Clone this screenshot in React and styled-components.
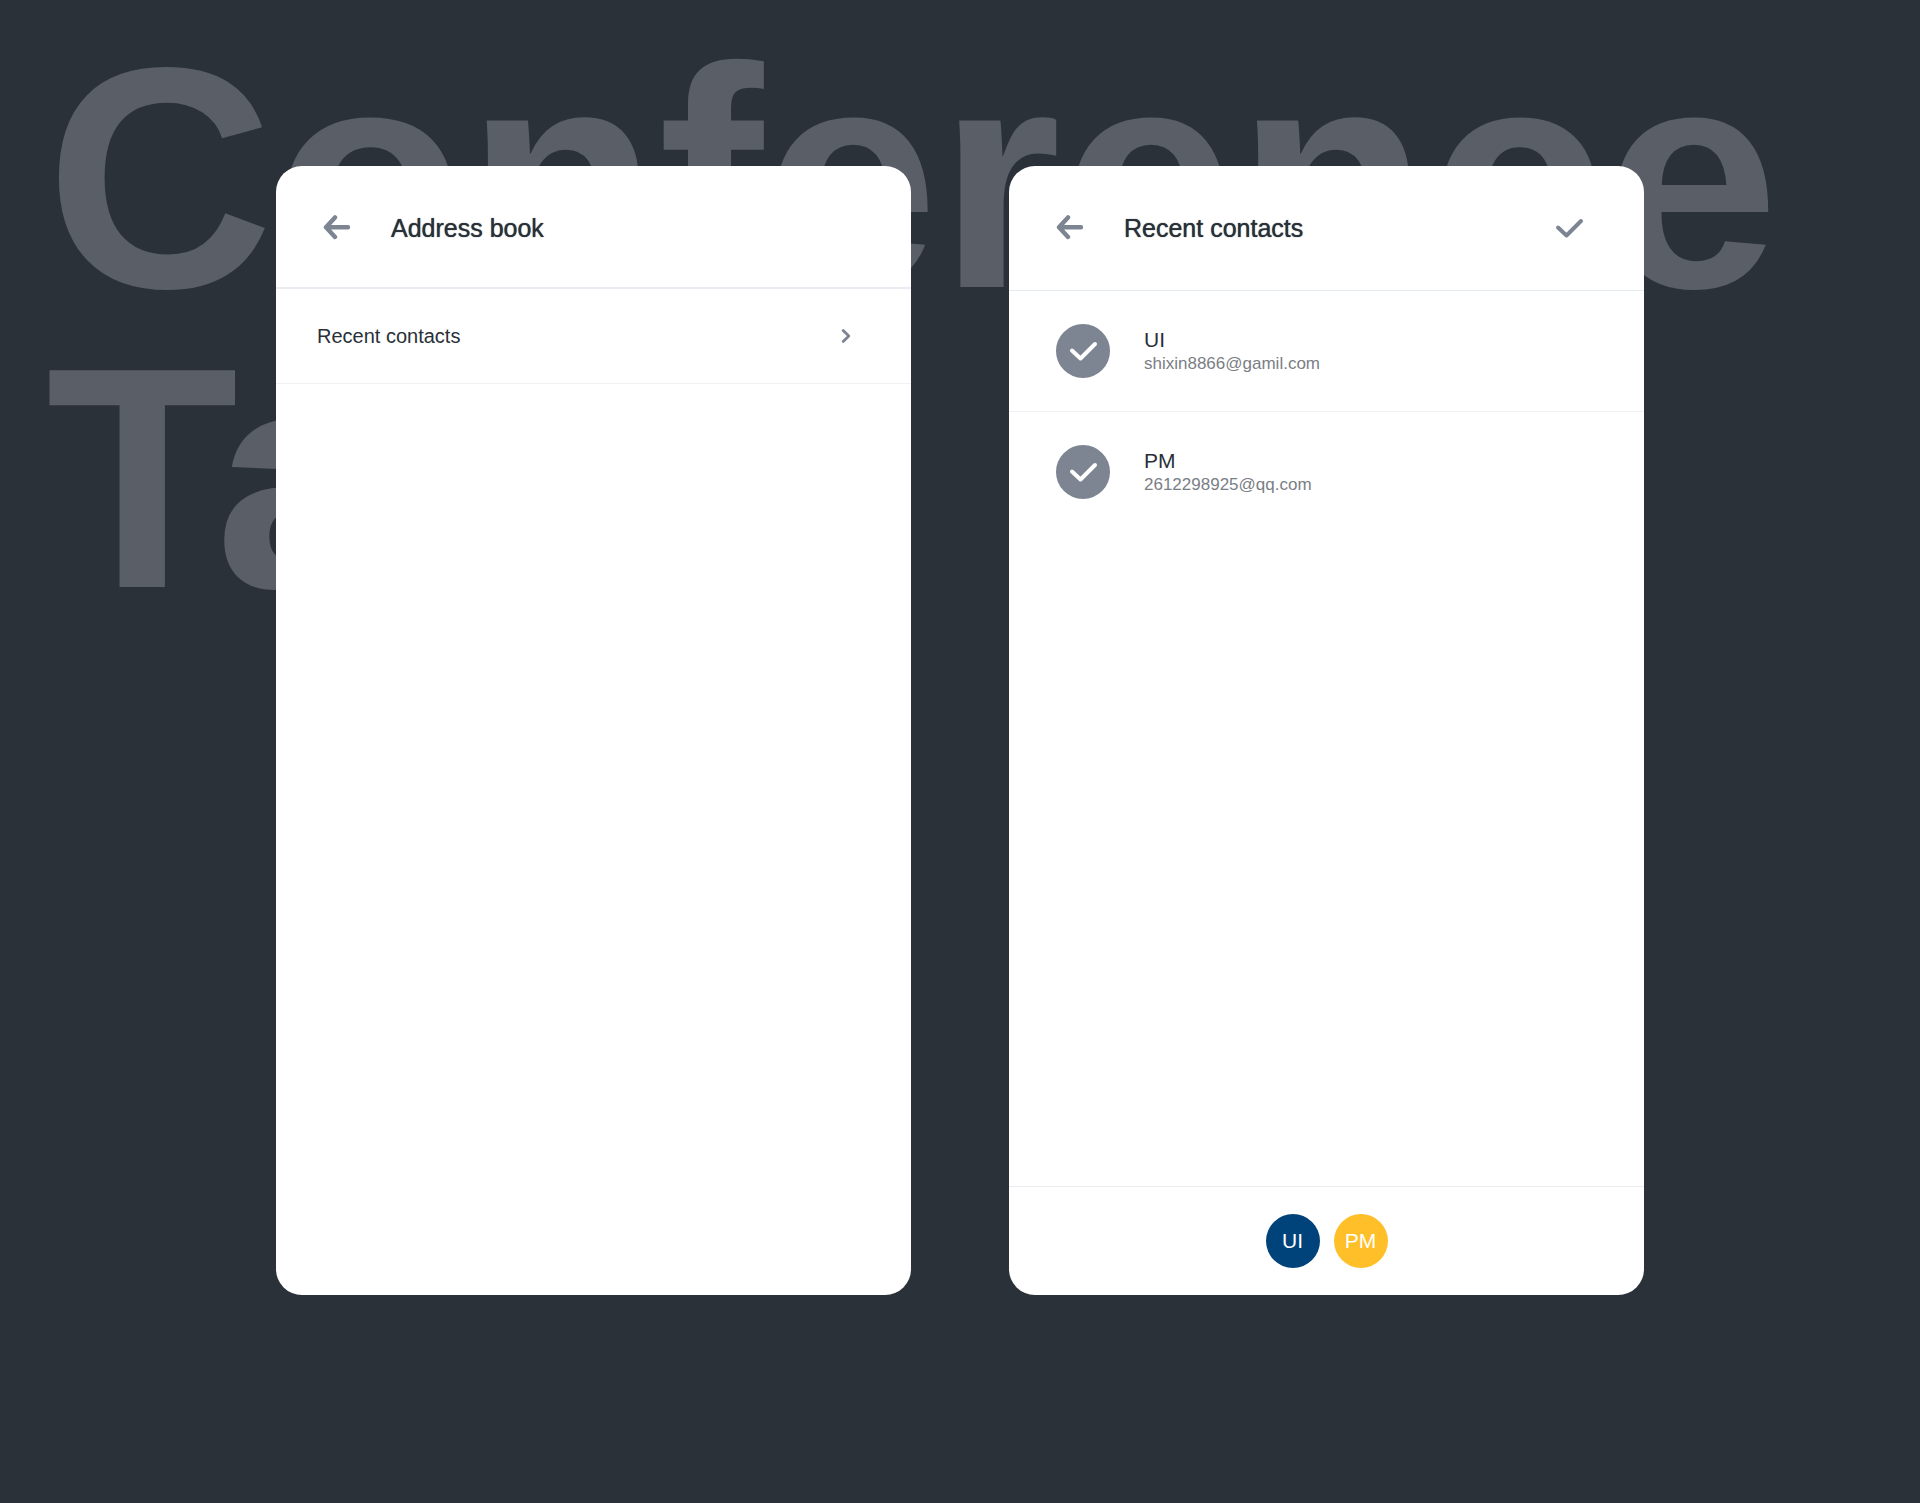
import React, { useState } from 'react'
import styled, { createGlobalStyle, ThemeProvider } from 'styled-components'

const theme = {
  color: {
    night: '#2b3139',
    ghost: '#5a5e67',
    ink: '#2a3038',
    slate: '#7d8492',
    grey: '#7a7e85',
    line: '#ebecf1',
    faint: '#f1f1f3',
    navy: '#00427a',
    amber: '#ffbf29',
  },
}

const GlobalStyle = createGlobalStyle`
  * {
    box-sizing: border-box;
  }
  body {
    margin: 0;
    background: ${theme.color.night};
    color: ${theme.color.ink};
    font-family: 'Liberation Sans', Arial, sans-serif;
  }
  button, input {
    font: inherit;
    color: inherit;
  }
`

// headline and screens share one grid cell, the screens lie on top
const Page = styled.main`
  display: grid;
  grid-template-columns: minmax(0, 1fr);
  min-height: 100vh;
  overflow: hidden;
`

const Headline = styled.h1`
  grid-area: 1 / 1;
  margin: 0;
  padding: 28px 46px 0;
  font-size: 315px;
  line-height: 300px;
  font-weight: bold;
  color: ${(props) => props.theme.color.ghost};
`

const Line = styled.span`
  display: block;
`

const Screens = styled.div`
  grid-area: 1 / 1;
  z-index: 1;
  display: flex;
  gap: 98px;
  width: 100%;
  max-width: 1368px;
  margin: 0 auto;
  padding: 166px 0 208px;
`

const Screen = styled.section`
  flex: 1;
  display: flex;
  flex-direction: column;
  background: #fff;
  border-radius: 26px;
  overflow: hidden;
`

const Header = styled.header`
  display: flex;
  align-items: center;
  padding: 47px 60px ${(props) => (props.$thick ? 44 : 47)}px 46px;
  border-bottom: ${(props) => (props.$thick ? 2 : 1)}px solid
    ${(props) => (props.$thick ? props.theme.color.line : '#e4eaf0')};
`

const IconButton = styled.button`
  display: flex;
  padding: 0;
  border: 0;
  background: none;
  color: ${(props) => props.theme.color.slate};
  cursor: pointer;
`

const Title = styled.h2`
  flex: 1;
  margin: 0 0 0 40px;
  font-size: 25px;
  line-height: 30px;
  font-weight: normal;
  text-shadow: 0 0 1px ${(props) => props.theme.color.ink};
`

const MenuRow = styled.button`
  display: flex;
  align-items: center;
  justify-content: space-between;
  padding: 35px 60px 35px 41px;
  border: 0;
  border-bottom: 1px solid ${(props) => props.theme.color.faint};
  background: none;
  font-size: 20px;
  line-height: 24px;
  text-align: left;
  cursor: pointer;
`

const Chevron = styled.svg`
  color: ${(props) => props.theme.color.slate};
`

const ContactList = styled.ul`
  flex: 1;
  margin: 0;
  padding: 0;
  list-style: none;
`

const ContactItem = styled.li`
  & + & {
    border-top: 1px solid ${(props) => props.theme.color.faint};
  }
`

const ContactLabel = styled.label`
  display: flex;
  align-items: center;
  gap: 34px;
  padding: 33px 47px;
  cursor: pointer;
`

const Tick = styled.span`
  display: grid;
  place-items: center;
  width: 54px;
  height: 54px;

  > * {
    grid-area: 1 / 1;
  }
  svg {
    color: #fff;
    pointer-events: none;
  }
`

const TickInput = styled.input`
  appearance: none;
  width: 54px;
  height: 54px;
  margin: 0;
  border: 2px solid ${(props) => props.theme.color.slate};
  border-radius: 50%;
  cursor: pointer;

  &:checked {
    background: ${(props) => props.theme.color.slate};
  }
`

const Name = styled.div`
  font-size: 21px;
  line-height: 26px;
`

const Email = styled.div`
  font-size: 17px;
  line-height: 22px;
  color: ${(props) => props.theme.color.grey};
`

const Footer = styled.footer`
  display: flex;
  justify-content: center;
  gap: 14px;
  padding: 27px;
  border-top: 1px solid #ececee;
`

const Avatar = styled.span`
  display: flex;
  align-items: center;
  justify-content: center;
  width: 54px;
  height: 54px;
  border-radius: 50%;
  background: ${(props) => props.theme.color[props.$tone]};
  color: #fff;
  font-size: 21px;
`

const BackIcon = () => (
  <svg width="29" height="26" viewBox="0 0 29 26" fill="none" stroke="currentColor">
    <path
      d="M13 2.4L4 12.2L13 22M4 12.2H26"
      strokeWidth="4.4"
      strokeLinecap="round"
      strokeLinejoin="round"
    />
  </svg>
)

const CheckIcon = () => (
  <svg width="29" height="22" viewBox="0 0 29 22" fill="none" stroke="currentColor">
    <path
      d="M3 10.5L11.5 18.5L26 4"
      strokeWidth="4"
      strokeLinecap="round"
      strokeLinejoin="round"
    />
  </svg>
)

const ChevronIcon = () => (
  <Chevron width="10" height="16" viewBox="0 0 10 16" fill="none" stroke="currentColor">
    <path
      d="M2.2 2.4L7.8 8L2.2 13.6"
      strokeWidth="2.8"
      strokeLinecap="round"
      strokeLinejoin="round"
    />
  </Chevron>
)

const contacts = [
  { name: 'UI', email: 'shixin8866@gamil.com', tone: 'navy' },
  { name: 'PM', email: '2612298925@qq.com', tone: 'amber' },
]

const Contact = ({ name, email, checked, onToggle }) => (
  <ContactItem>
    <ContactLabel>
      <Tick>
        <TickInput type="checkbox" checked={checked} onChange={onToggle} />
        <CheckIcon />
      </Tick>
      <div>
        <Name>{name}</Name>
        <Email>{email}</Email>
      </div>
    </ContactLabel>
  </ContactItem>
)

const App = () => {
  const [picked, setPicked] = useState(['UI', 'PM'])

  const toggle = (name) =>
    setPicked(
      picked.includes(name)
        ? picked.filter((item) => item !== name)
        : [...picked, name]
    )

  return (
    <ThemeProvider theme={theme}>
      <GlobalStyle />
      <Page>
        <Headline>
          <Line>Conference</Line>
          <Line>Ta</Line>
        </Headline>
        <Screens>
          <Screen>
            <Header $thick>
              <IconButton type="button" aria-label="Back">
                <BackIcon />
              </IconButton>
              <Title>Address book</Title>
            </Header>
            <MenuRow type="button">
              Recent contacts
              <ChevronIcon />
            </MenuRow>
          </Screen>

          <Screen>
            <Header>
              <IconButton type="button" aria-label="Back">
                <BackIcon />
              </IconButton>
              <Title>Recent contacts</Title>
              <IconButton type="button" aria-label="Done">
                <CheckIcon />
              </IconButton>
            </Header>
            <ContactList>
              {contacts.map((contact) => (
                <Contact
                  key={contact.name}
                  name={contact.name}
                  email={contact.email}
                  checked={picked.includes(contact.name)}
                  onToggle={() => toggle(contact.name)}
                />
              ))}
            </ContactList>
            <Footer>
              {contacts
                .filter((contact) => picked.includes(contact.name))
                .map((contact) => (
                  <Avatar key={contact.name} $tone={contact.tone}>
                    {contact.name}
                  </Avatar>
                ))}
            </Footer>
          </Screen>
        </Screens>
      </Page>
    </ThemeProvider>
  )
}

export default App
